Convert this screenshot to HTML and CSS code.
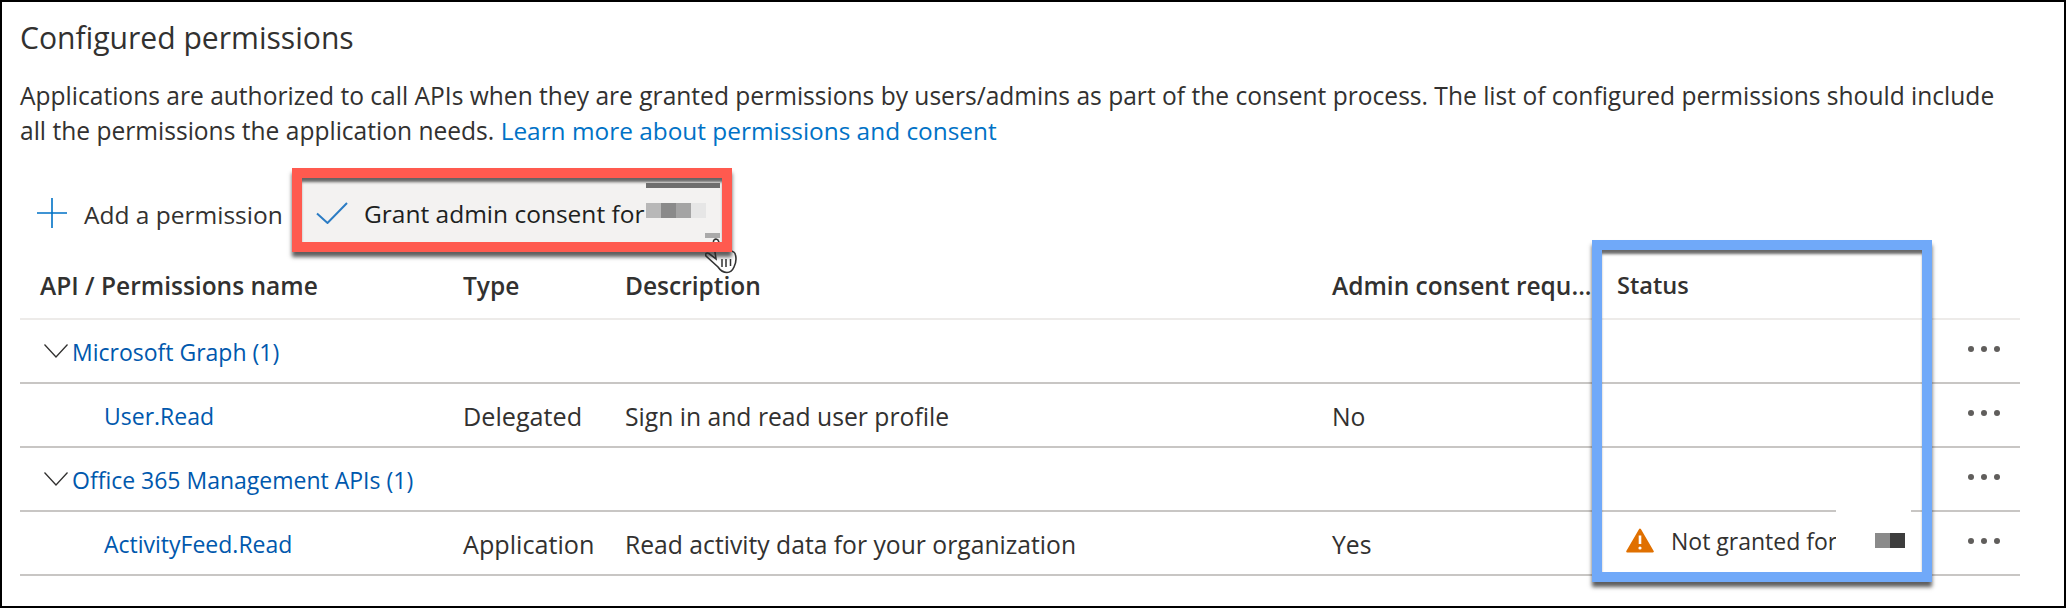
FILE: index.html
```html
<!DOCTYPE html>
<html>
<head>
    <link rel="stylesheet" href="styles.css">
</head>

<body>

    <div class="page">
        <h2 class="title">Configured permissions</h2>
        <p class="intro">Applications are authorized to call APIs when they are granted permissions by users/admins as part of the consent process. The list of configured permissions should include<br>all the permissions the application needs. <a class="intro-link">Learn more about permissions and consent</a></p>

        <div class="toolbar">
            <div class="tool tool-add">
                <svg class="icon-plus" viewBox="0 0 30 30"><path d="M15 0V30M0 15H30" fill="none" stroke="#0072c6" stroke-width="1.6"/></svg>
                <span>Add a permission</span>
            </div>
            <div class="tool tool-grant">
                <svg class="icon-check" viewBox="0 0 32 22"><path d="M1 11.5L11.5 21L31 1" fill="none" stroke="#2b7cc4" stroke-width="2"/></svg>
                <span>Grant admin consent for</span>
            </div>
        </div>

        <div class="row row-head">
            <div>API / Permissions name</div>
            <div>Type</div>
            <div>Description</div>
            <div>Admin consent requ...</div>
            <div class="head-status">Status</div>
            <div></div>
        </div>

        <div class="row row-group">
            <div class="group-name">
                <svg class="icon-chevron" viewBox="0 0 24 14"><path d="M0.5 0.5L12 13L23.5 0.5" fill="none" stroke="#323130" stroke-width="1.3"/></svg>
                <a>Microsoft Graph (1)</a>
            </div>
            <div></div>
            <div></div>
            <div></div>
            <div></div>
            <div class="more"><i></i><i></i><i></i></div>
        </div>

        <div class="row row-perm">
            <div class="perm-name"><a>User.Read</a></div>
            <div class="perm-type">Delegated</div>
            <div>Sign in and read user profile</div>
            <div>No</div>
            <div></div>
            <div class="more"><i></i><i></i><i></i></div>
        </div>

        <div class="row row-group">
            <div class="group-name">
                <svg class="icon-chevron" viewBox="0 0 24 14"><path d="M0.5 0.5L12 13L23.5 0.5" fill="none" stroke="#323130" stroke-width="1.3"/></svg>
                <a>Office 365 Management APIs (1)</a>
            </div>
            <div></div>
            <div></div>
            <div></div>
            <div></div>
            <div class="more"><i></i><i></i><i></i></div>
        </div>

        <div class="row row-perm">
            <div class="perm-name"><a>ActivityFeed.Read</a></div>
            <div class="perm-type">Application</div>
            <div>Read activity data for your organization</div>
            <div>Yes</div>
            <div class="status">
                <svg class="icon-warn" viewBox="0 0 28 25"><path d="M14 1.5L26.8 23.5H1.2Z" fill="#e07000" stroke="#e07000" stroke-width="2" stroke-linejoin="round"/><path d="M14 7.5V16" stroke="#fff" stroke-width="2.6"/><circle cx="14" cy="20" r="1.6" fill="#fff"/></svg>
                <span>Not granted for</span>
            </div>
            <div class="more"><i></i><i></i><i></i></div>
        </div>

        <!-- annotations drawn on top of the screenshot -->
        <svg class="cursor" viewBox="0 0 32 36"><path d="M9 2C10.5 0.5 13 1 13.5 3L16 10C18 9.5 19.5 10 20 11.5C22 11 24 11.5 24.5 13C27 13 30 14 30.5 17C31.5 21 31 25 29 29C27.5 32.5 25.5 34.5 22 34.5C18 34.5 15 32 13 29L1 18C0 16 1.5 14 4 15.5L11 21L8.5 4C8.4 3.2 8.5 2.5 9 2Z" fill="#fff" stroke="#333" stroke-width="1.6"/><path d="M17 21V29M21 21V29M25.5 21V28" stroke="#333" stroke-width="1.5"/></svg>

        <div class="callout callout-red">
            <b class="blur blur-strip"></b>
            <b class="blur blur-a"></b>
            <b class="blur blur-b"></b>
            <b class="blur blur-c"></b>
            <b class="blur blur-d"></b>
            <b class="blur blur-e"></b>
        </div>

        <div class="callout callout-blue">
            <b class="patch"></b>
            <b class="blur blur-f"></b>
            <b class="blur blur-g"></b>
        </div>
    </div>

</body>

</html>
```

FILE: styles.css
```css
* {
    box-sizing: border-box;
}

html, body {
    margin: 0;
    background: #ffffff;
}

.page {
    position: relative;
    width: 2066px;
    height: 608px;
    overflow: hidden;
    border: 2px solid #000000;
    padding-left: 18px;
    font-family: "Open Sans", "Noto Sans", sans-serif;
    font-size: 24.5px;
    color: #323130;
}

.title {
    margin: 0;
    height: 72px;
    padding-top: 14px;
    font-size: 30.1px;
    line-height: 44px;
    font-weight: 400;
}

.intro {
    margin: 0;
    height: 94px;
    padding-top: 4px;
    font-size: 24.57px;
    line-height: 35px;
    white-space: nowrap;
}

.intro-link {
    font-size: 24.4px;
    color: #0072c6;
}

.toolbar {
    display: flex;
    height: 84px;
    align-items: center;
}

.tool {
    display: flex;
    align-items: center;
}

.tool-add {
    width: 282px;
    padding-left: 17px;
    padding-top: 6px;
}

.tool-add span {
    padding-top: 2px;
}

.tool-grant {
    width: 420px;
    height: 64px;
    padding-left: 14px;
    padding-top: 6px;
    background: #f3f2f1;
    color: #201f1e;
}

.icon-plus {
    width: 30px;
    height: 30px;
    margin-right: 17px;
}

.icon-check {
    width: 32px;
    height: 22px;
    margin-right: 16px;
}

.row {
    display: grid;
    grid-template-columns: 443px 162px 707px 285px 351px 52px;
    height: 64px;
    align-items: center;
    width: 2000px;
    font-size: 24.7px;
    border-bottom: 2px solid #c8c6c4;
}

.row-head {
    height: 68px;
    padding-left: 20px;
    grid-template-columns: 423px 162px 707px 285px 351px 52px;
    border-bottom-color: #edebe9;
    font-size: 24.5px;
    font-weight: 600;
}

.row-perm > div {
    padding-top: 2px;
}

.head-status {
    font-size: 23.6px;
}

.group-name {
    display: flex;
    align-items: center;
    padding-left: 24px;
}

.group-name a {
    margin-top: 2px;
}

.icon-chevron {
    width: 24px;
    height: 14px;
    margin-right: 4px;
}

.group-name a, .perm-name a {
    font-size: 23px;
    color: #0058ad;
}

.row-perm > .perm-name {
    padding-left: 84px;
    padding-top: 0;
}

.perm-type {
    font-size: 25.2px;
}

.row-perm > .status {
    display: flex;
    align-items: center;
    padding-left: 9px;
    padding-top: 0;
    padding-bottom: 5px;
    font-size: 23px;
    white-space: nowrap;
}

.icon-warn {
    width: 28px;
    height: 25px;
    margin-right: 17px;
}

.more, .row-perm > .more {
    display: flex;
    gap: 7px;
    margin-bottom: 4px;
    padding-top: 0;
}

.more i {
    width: 6px;
    height: 6px;
    border-radius: 50%;
    background: #605e5c;
}

.callout {
    position: absolute;
    border: 10px solid;
    box-shadow: 0 5px 4px rgba(40, 40, 40, 0.75), inset 0 5px 3px -1px rgba(40, 40, 40, 0.7);
}

.callout-red {
    left: 290px;
    top: 166px;
    width: 440px;
    height: 84px;
    border-color: #ff5a4f;
}

.callout-blue {
    left: 1590px;
    top: 238px;
    width: 340px;
    height: 342px;
    border-color: #70a9f9;
}

.blur {
    position: absolute;
    display: block;
}

.blur-strip { left: 344px; top: 5px; width: 74px; height: 5px; background: #6e6e6e; }
.blur-a { left: 344px; top: 25px; width: 15px; height: 15px; background: #b8b8b8; }
.blur-b { left: 359px; top: 25px; width: 15px; height: 15px; background: #8a8a8a; }
.blur-c { left: 374px; top: 25px; width: 15px; height: 15px; background: #a4a4a4; }
.blur-d { left: 389px; top: 25px; width: 15px; height: 15px; background: #e6e6e6; }
.blur-e { left: 403px; top: 55px; width: 15px; height: 5px; background: #aaaaaa; }
.blur-f { left: 273px; top: 283px; width: 15px; height: 15px; background: #8a8a8a; }
.blur-g { left: 288px; top: 283px; width: 15px; height: 15px; background: #3d3d3d; }

.patch {
    position: absolute;
    display: block;
    left: 234px;
    top: 256px;
    width: 75px;
    height: 56px;
    background: #ffffff;
}

.cursor {
    position: absolute;
    left: 703px;
    top: 236px;
    width: 32px;
    height: 36px;
}
```
